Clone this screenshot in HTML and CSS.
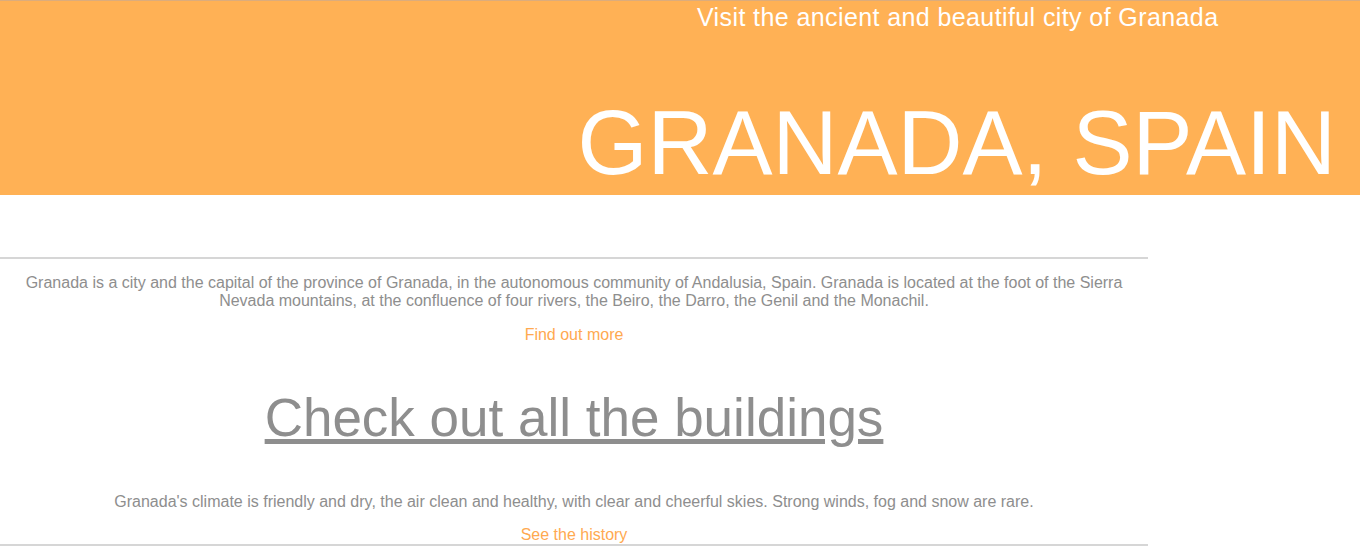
FILE: index.html
```html
<!DOCTYPE html>
<html>
<head>
<meta charset="utf-8">
<title>Granada, Spain</title>
<link rel="stylesheet" href="styles.css">
</head>
<body>
<header class="hero">
  <h2 class="hero-sub">Visit the ancient and beautiful city of Granada</h2>
  <h1 class="hero-title">GRANADA, SPAIN</h1>
</header>
<main class="content">
  <hr class="rule">
  <section class="block block-first">
    <p class="text">Granada is a city and the capital of the province of Granada, in the autonomous community of Andalusia, Spain. Granada is located at the foot of the Sierra Nevada mountains, at the confluence of four rivers, the Beiro, the Darro, the Genil and the Monachil.</p>
    <a class="more" href="#">Find out more</a>
  </section>
  <h2 class="big-link"><a href="#">Check out all the buildings</a></h2>
  <section class="block block-last">
    <p class="text">Granada's climate is friendly and dry, the air clean and healthy, with clear and cheerful skies. Strong winds, fog and snow are rare.</p>
    <a class="more" href="#">See the history</a>
  </section>
  <hr class="rule">
</main>
</body>
</html>
```

FILE: styles.css
```css
html, body {
  margin: 0;
  padding: 0;
  background: #ffffff;
}
body {
  font-family: "Liberation Sans", Arial, Helvetica, sans-serif;
}
.hero {
  background: #ffb155;
  border-top: 1px solid #dcac7c;
  padding-top: 2px;
  box-sizing: border-box;
  display: flex;
  flex-direction: column;
  justify-content: space-between;
  height: 195px;
}
.hero-sub {
  margin: 0;
  padding-left: calc(50% + 17px);
  color: #ffffff;
  font-size: 25px;
  font-weight: normal;
  line-height: 28px;
  letter-spacing: 0.4px;
}
.hero-title {
  margin: 0;
  padding-right: 24px;
  text-align: right;
  color: #ffffff;
  font-size: 90px;
  font-weight: normal;
  line-height: 103px;
}
.content {
  width: 1148px;
  margin-top: 62px;
  text-align: center;
  color: #8e8e8e;
}
.rule {
  margin: 0;
  border: 0;
  border-top: 2px solid #d6d6d6;
  height: 0;
}
.block {
  display: flex;
  flex-direction: column;
  align-items: center;
  gap: 16px;
  padding: 0 20px;
}
.block-first {
  margin-top: 15px;
}
.block-last {
  gap: 15px;
}
.text {
  margin: 0;
  font-size: 16px;
  line-height: 18px;
  color: #8e8e8e;
}
.more {
  color: #ffa950;
  text-decoration: none;
  font-size: 16px;
  line-height: 18px;
}
.big-link {
  margin: 43px 0 44px;
  font-size: 53px;
  font-weight: normal;
  line-height: 62px;
}
.big-link a {
  color: #8e8e8e;
  text-decoration: underline;
}
```
